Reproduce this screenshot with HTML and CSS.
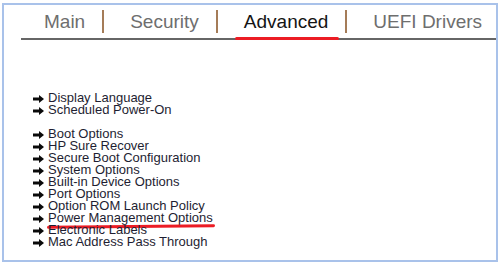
FILE: index.html
```html
<!DOCTYPE html>
<html lang="en">
  <head>
    <meta charset="UTF-8" />
    <title>BIOS Advanced</title>
    <link rel="stylesheet" href="styles.css">
  </head>
  <body>
    <div class="frame">
      <div class="tabs">
        <span class="tab">Main</span>
        <span class="sep"></span>
        <span class="tab">Security</span>
        <span class="sep"></span>
        <span class="tab active">Advanced</span>
        <span class="sep"></span>
        <span class="tab">UEFI Drivers</span>
      </div>

      <ul class="menu">
        <li><svg class="arrow" viewBox="0 0 11 8"><path d="M0 2.4h6V0l5 4-5 4V5.6H0z" /></svg>Display Language</li>
        <li><svg class="arrow" viewBox="0 0 11 8"><path d="M0 2.4h6V0l5 4-5 4V5.6H0z" /></svg>Scheduled Power-On</li>
        <li class="spacer"></li>
        <li><svg class="arrow" viewBox="0 0 11 8"><path d="M0 2.4h6V0l5 4-5 4V5.6H0z" /></svg>Boot Options</li>
        <li><svg class="arrow" viewBox="0 0 11 8"><path d="M0 2.4h6V0l5 4-5 4V5.6H0z" /></svg>HP Sure Recover</li>
        <li><svg class="arrow" viewBox="0 0 11 8"><path d="M0 2.4h6V0l5 4-5 4V5.6H0z" /></svg>Secure Boot Configuration</li>
        <li><svg class="arrow" viewBox="0 0 11 8"><path d="M0 2.4h6V0l5 4-5 4V5.6H0z" /></svg>System Options</li>
        <li><svg class="arrow" viewBox="0 0 11 8"><path d="M0 2.4h6V0l5 4-5 4V5.6H0z" /></svg>Built-in Device Options</li>
        <li><svg class="arrow" viewBox="0 0 11 8"><path d="M0 2.4h6V0l5 4-5 4V5.6H0z" /></svg>Port Options</li>
        <li><svg class="arrow" viewBox="0 0 11 8"><path d="M0 2.4h6V0l5 4-5 4V5.6H0z" /></svg>Option ROM Launch Policy</li>
        <li class="marked"><svg class="arrow" viewBox="0 0 11 8"><path d="M0 2.4h6V0l5 4-5 4V5.6H0z" /></svg>Power Management Options</li>
        <li><svg class="arrow" viewBox="0 0 11 8"><path d="M0 2.4h6V0l5 4-5 4V5.6H0z" /></svg>Electronic Labels</li>
        <li><svg class="arrow" viewBox="0 0 11 8"><path d="M0 2.4h6V0l5 4-5 4V5.6H0z" /></svg>Mac Address Pass Through</li>
      </ul>
    </div>
  </body>
</html>
```

FILE: styles.css
```css
* {
  margin: 0;
  padding: 0;
  box-sizing: border-box;
}
body {
  background-color: #ffffff;
  font-family: "Liberation Sans", Arial, sans-serif;
}
.frame {
  margin: 3px 2px 0 2px;
  height: 259px;
  border: 2px solid #a9c2ea;
  overflow: hidden;
}

.tabs {
  display: flex;
  align-items: flex-start;
  margin-left: 17px;
  padding: 5px 0 4px 23px;
  height: 35px;
  border-bottom: 2px solid #666666;
}
.tab {
  position: relative;
  font-size: 19px;
  line-height: 24px;
  color: #6e6e6e;
  white-space: nowrap;
}
.tab.active {
  color: #141414;
}
.tab.active::after {
  content: "";
  position: absolute;
  left: -9px;
  right: -11px;
  bottom: -6px;
  height: 3px;
  border-radius: 2px;
  background-color: #ec1c24;
}
.sep {
  width: 2px;
  height: 23px;
  margin: 0 26px 0 17px;
  background-color: #a57c58;
}

.menu {
  list-style-type: none;
  margin: 52px 0 0 29px;
}
.menu li {
  position: relative;
  display: flex;
  align-items: center;
  font-size: 13px;
  line-height: 12px;
  height: 12px;
  color: #1e1e32;
  white-space: nowrap;
}
.menu li.spacer {
  height: 12px;
}
.arrow {
  width: 11px;
  height: 8px;
  margin: 1px 4px 0 0;
  fill: #0a0a0a;
}
.menu li.marked::after {
  content: "";
  position: absolute;
  left: 14px;
  top: 13px;
  width: 168px;
  height: 3px;
  border-radius: 2px;
  background-color: #ec1c24;
  transform: rotate(-0.6deg);
}
```
